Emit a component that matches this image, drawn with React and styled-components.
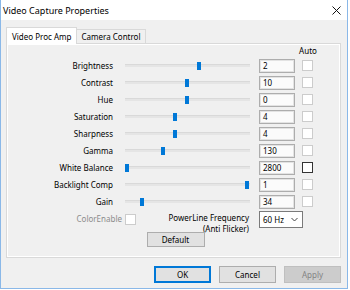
import React from "react";
import styled, { createGlobalStyle } from "styled-components";

const GlobalStyle = createGlobalStyle`
  html, body {
    margin: 0;
    padding: 0;
    background: #ffffff;
  }
  body {
    font-family: "Noto Sans", "DejaVu Sans", sans-serif;
    color: #000;
  }
`;

const Window = styled.div`
  width: 348px;
  height: 289px;
  box-sizing: border-box;
  border: 1px solid #8ab8e8;
  border-top: none;
  display: flex;
  flex-direction: column;
  background: #f0f0f0;
`;

const TitleBar = styled.div`
  height: 20px;
  flex-shrink: 0;
  background: #ffffff;
  display: flex;
  align-items: center;
  justify-content: space-between;
  padding: 0 6px 0 2px;
  font-size: 9px;
`;

const Body = styled.div`
  flex: 1;
  display: flex;
  flex-direction: column;
  padding: 7px 6px 0 5px;
`;

const Tabs = styled.div`
  display: flex;
  align-items: flex-end;
  position: relative;
  z-index: 1;
  margin-bottom: -1px;
`;

const Tab = styled.div`
  box-sizing: border-box;
  height: ${(p) => (p.active ? "17px" : "15px")};
  padding: 0 ${(p) => (p.active ? "5px" : "4px")};
  border: 1px solid #d9d9d9;
  border-bottom: ${(p) => (p.active ? "none" : "1px solid #d9d9d9")};
  margin-left: ${(p) => (p.active ? "0" : "-1px")};
  background: ${(p) => (p.active ? "#ffffff" : "#f0f0f0")};
  font-size: 8px;
  display: flex;
  align-items: center;
`;

const Panel = styled.div`
  box-sizing: border-box;
  height: 215px;
  border: 1px solid #d9d9d9;
  box-shadow: inset 1px 1px 0 #ffffff, inset -1px -1px 0 #ffffff;
  padding: 0 0 0 13px;
  display: flex;
  flex-direction: column;
`;

const Grid = styled.div`
  display: grid;
  grid-template-columns: 105px 134px 40px 18px;
  grid-template-rows: 12px;
  grid-auto-rows: 14px;
  row-gap: 3px;
  font-size: 8px;
`;

const AutoHead = styled.div`
  grid-column: 4;
  justify-self: center;
  line-height: 12px;
  padding-top: 1px;
`;

const Label = styled.div`
  grid-column: 1;
  text-align: right;
  padding-right: 12px;
  line-height: 14px;
  white-space: nowrap;
  color: ${(p) => (p.disabled ? "#8c8c8c" : "#000")};
`;

const Slider = styled.div`
  position: relative;
  width: 125px;
  height: 14px;
`;

const Track = styled.div`
  margin-top: 5px;
  height: 3px;
  background: #e5e5e5;
  border-top: 1px solid #d9d9d9;
  box-sizing: border-box;
`;

const Thumb = styled.div`
  position: absolute;
  top: 3px;
  width: 4px;
  height: 8px;
  background: #0078d7;
`;

const ValueBox = styled.div`
  box-sizing: border-box;
  width: 36px;
  height: 14px;
  border: 1px solid #adadad;
  box-shadow: inset 0 0 0 1px #e3e3e3;
  background: #fbfbfb;
  padding-left: 3px;
  line-height: 12px;
`;

const Check = styled.div`
  box-sizing: border-box;
  width: 11px;
  height: 11px;
  margin: ${(p) => p.margin || "1px 0 0 3px"};
  border: 1px solid ${(p) => (p.enabled ? "#333333" : "#cccccc")};
  background: #ffffff;
  flex-shrink: 0;
`;

const OptionsRow = styled.div`
  grid-column: 1 / -1;
  display: grid;
  grid-template-columns: 105px 134px 58px;
  margin-top: -1px;
  height: 24px;
`;

const OptLabel = styled.div`
  text-align: right;
  padding-right: 3px;
  line-height: 11px;
  margin-top: 2px;
  color: #8c8c8c;
`;

const OptMiddle = styled.div`
  display: flex;
  justify-content: space-between;
  padding-right: 10px;
`;

const TwoLine = styled.div`
  text-align: right;
  line-height: 11px;
  margin-top: 1px;
  white-space: nowrap;
`;

const Select = styled.div`
  box-sizing: border-box;
  width: 44px;
  height: 17px;
  border: 1px solid #7a7a7a;
  background: #ffffff;
  display: flex;
  align-items: center;
  justify-content: space-between;
  padding: 0 4px 0 3px;
`;

const DefaultRow = styled.div`
  display: flex;
  justify-content: center;
  margin-top: 6px;
  padding-right: 9px;
`;

const Button = styled.div`
  box-sizing: border-box;
  width: ${(p) => p.width || "57px"};
  height: ${(p) => p.height || "17px"};
  display: flex;
  align-items: center;
  justify-content: center;
  font-size: 8px;
  background: ${(p) => (p.disabled ? "#cccccc" : "#e1e1e1")};
  color: ${(p) => (p.disabled ? "#838383" : "#000")};
  border: 1px solid ${(p) => (p.primary ? "#0078d7" : p.disabled ? "#bfbfbf" : "#adadad")};
  box-shadow: ${(p) => (p.primary ? "inset 0 0 0 1px #0078d7" : "none")};
`;

const ButtonRow = styled.div`
  display: flex;
  justify-content: flex-end;
  gap: 8px;
  margin-top: 8px;
  padding-right: 0;
`;

const rows = [
  { name: "Brightness", pos: 74, value: "2" },
  { name: "Contrast", pos: 62, value: "10" },
  { name: "Hue", pos: 62, value: "0" },
  { name: "Saturation", pos: 50, value: "4" },
  { name: "Sharpness", pos: 50, value: "4" },
  { name: "Gamma", pos: 38, value: "130" },
  { name: "White Balance", pos: 2, value: "2800", auto: true },
  { name: "Backlight Comp", pos: 122, value: "1" },
  { name: "Gain", pos: 17, value: "34" },
];

const CloseIcon = () => (
  <svg width="9" height="9" viewBox="0 0 9 9">
    <path d="M0.5 0.5 L8.5 8.5 M8.5 0.5 L0.5 8.5" stroke="#111" strokeWidth="1" fill="none" />
  </svg>
);

const Chevron = () => (
  <svg width="7" height="5" viewBox="0 0 7 5">
    <path d="M0.5 1 L3.5 4 L6.5 1" stroke="#444" strokeWidth="1" fill="none" />
  </svg>
);

export default function App() {
  return (
    <>
      <GlobalStyle />
      <Window>
        <TitleBar>
          <span>Video Capture Properties</span>
          <CloseIcon />
        </TitleBar>
        <Body>
          <Tabs>
            <Tab active>Video Proc Amp</Tab>
            <Tab>Camera Control</Tab>
          </Tabs>
          <Panel>
            <Grid>
              <AutoHead>Auto</AutoHead>
              {rows.map((r) => (
                <React.Fragment key={r.name}>
                  <Label>{r.name}</Label>
                  <Slider>
                    <Track />
                    <Thumb style={{ left: r.pos - 2 }} />
                  </Slider>
                  <ValueBox>{r.value}</ValueBox>
                  <Check enabled={r.auto} />
                </React.Fragment>
              ))}
              <OptionsRow>
                <OptLabel>ColorEnable</OptLabel>
                <OptMiddle>
                  <Check margin="3px 0 0 0" />
                  <TwoLine>
                    PowerLine Frequency
                    <br />
                    (Anti Flicker)
                  </TwoLine>
                </OptMiddle>
                <Select>
                  <span>60 Hz</span>
                  <Chevron />
                </Select>
              </OptionsRow>
            </Grid>
            <DefaultRow>
              <Button width="58px" height="15px">Default</Button>
            </DefaultRow>
          </Panel>
          <ButtonRow>
            <Button primary>OK</Button>
            <Button>Cancel</Button>
            <Button disabled>Apply</Button>
          </ButtonRow>
        </Body>
      </Window>
    </>
  );
}
